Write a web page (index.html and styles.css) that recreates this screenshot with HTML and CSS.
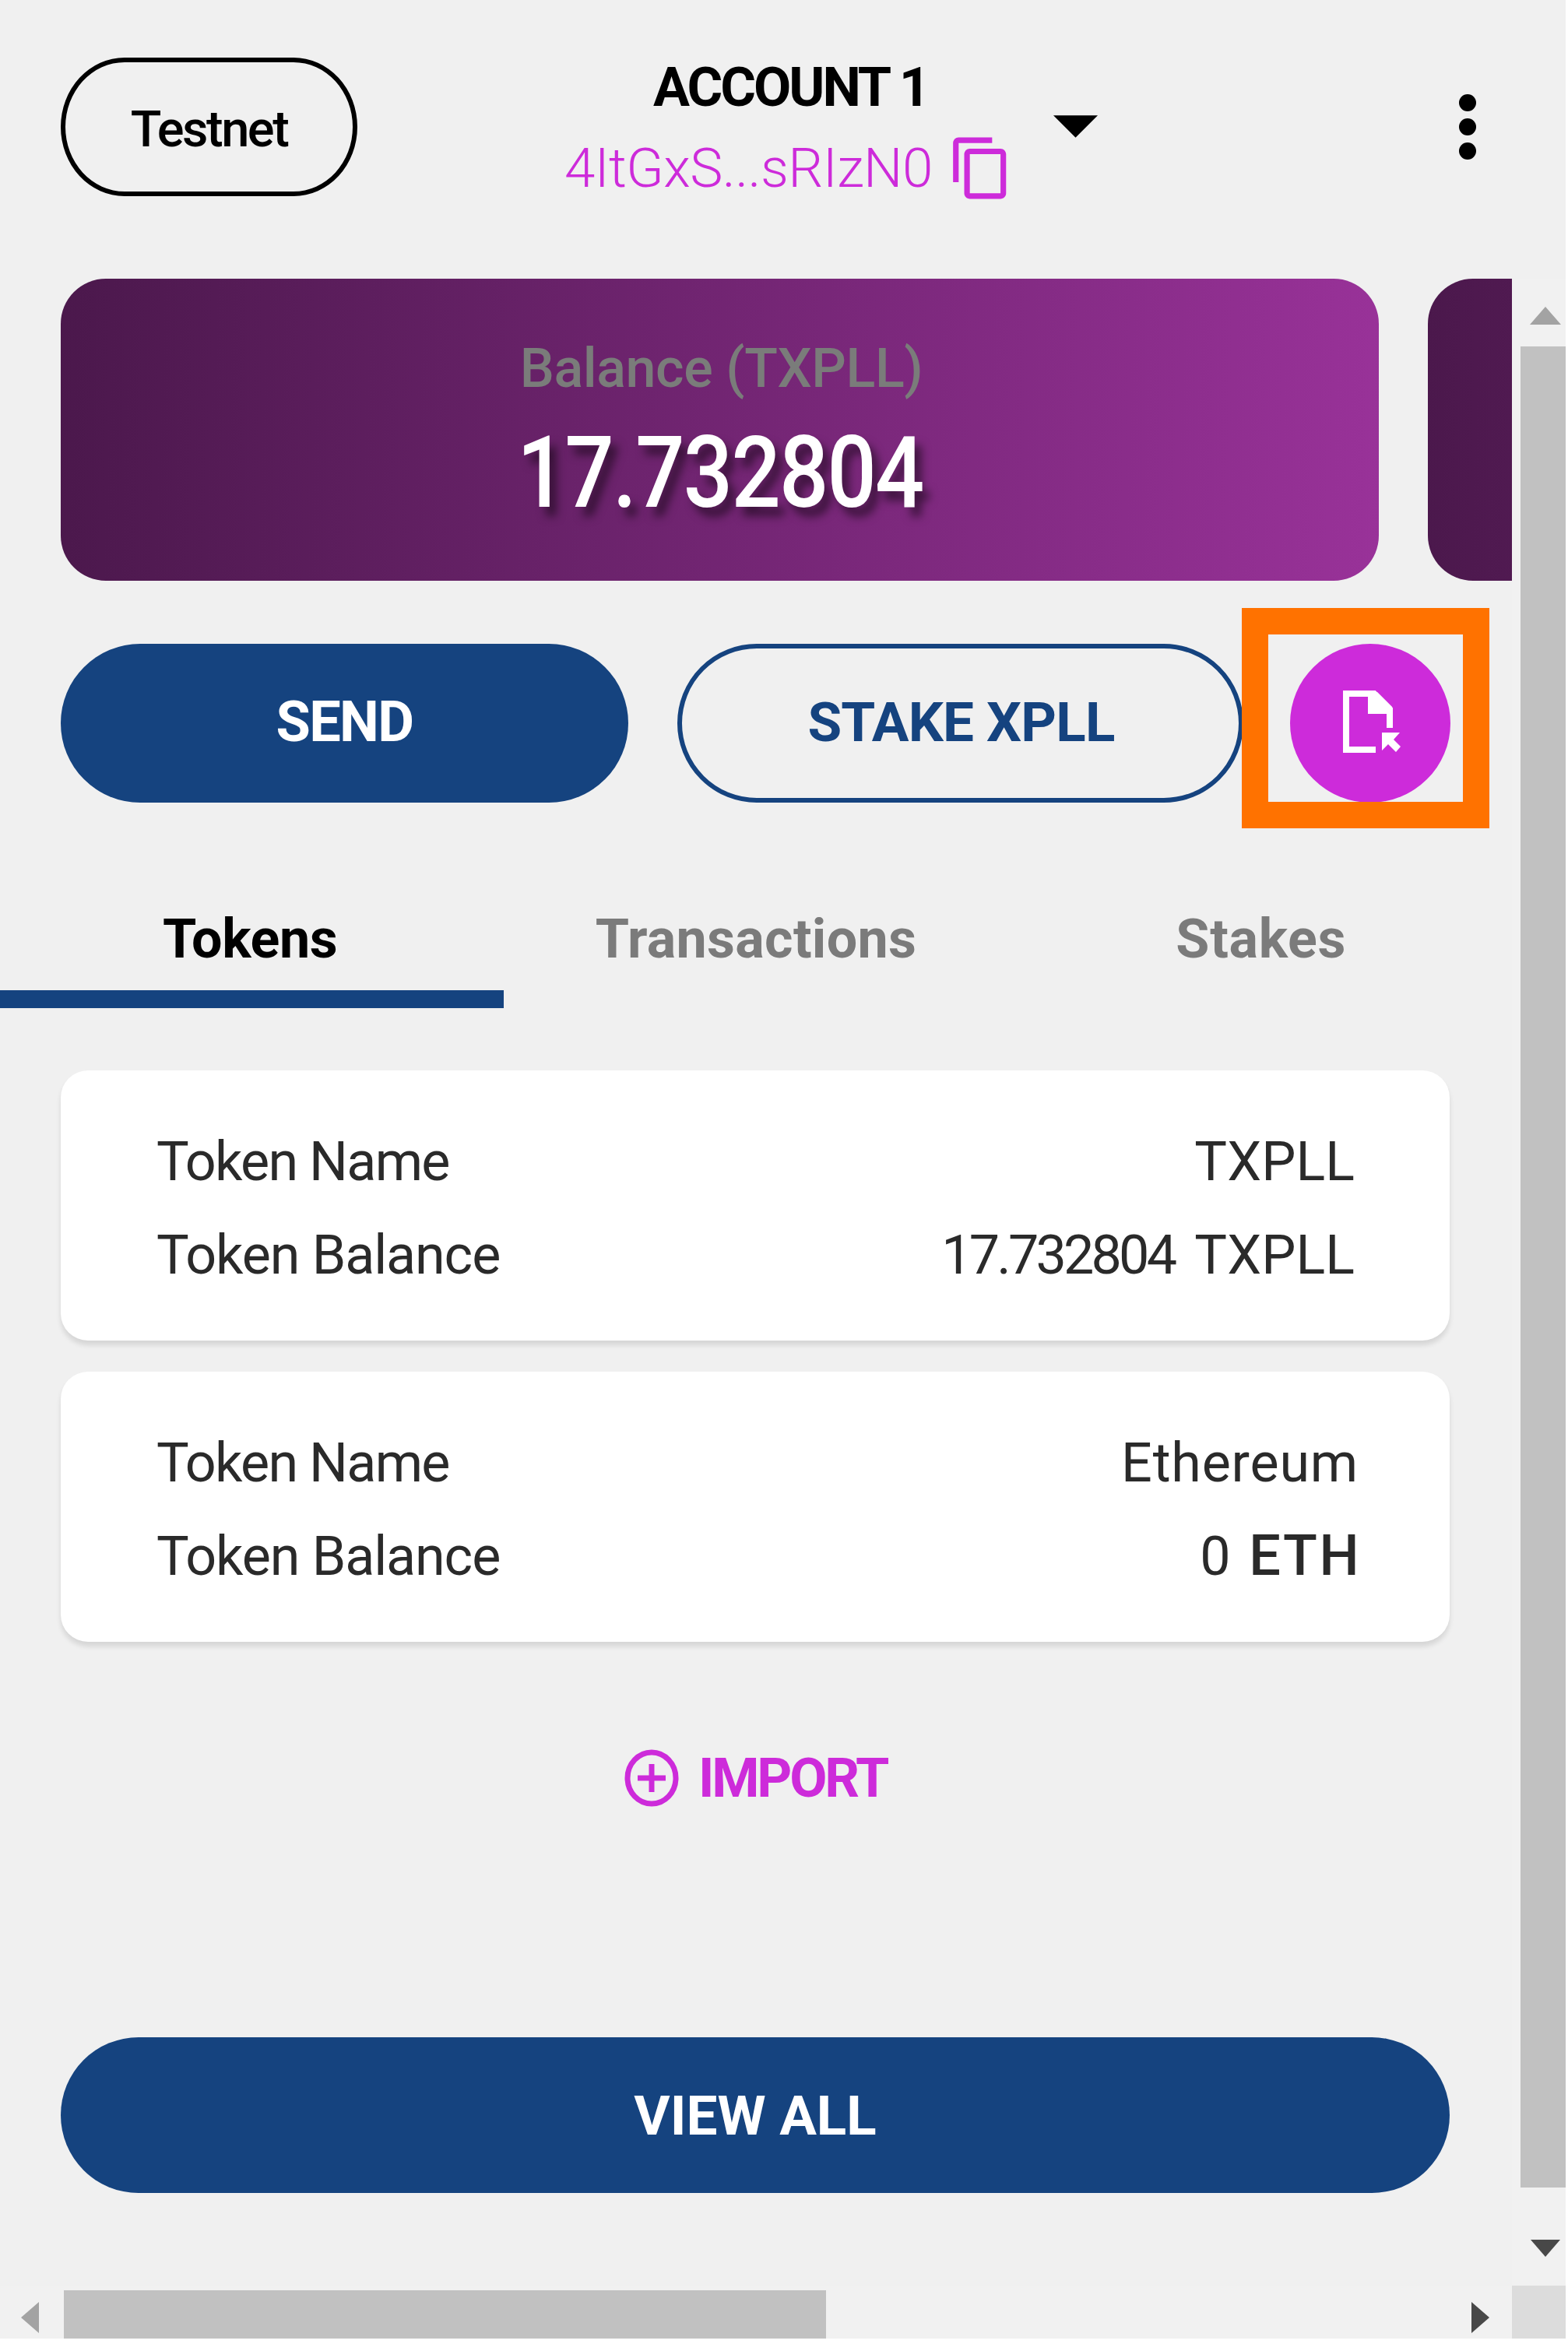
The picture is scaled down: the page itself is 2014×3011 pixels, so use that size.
FILE: index.html
```html
<!DOCTYPE html>
<html lang="en">
<head>
<meta charset="utf-8">
<title>Wallet</title>
<link rel="stylesheet" href="styles.css">
</head>
<body>
<div class="app">
  <header class="header">
    <button class="network"><span>Testnet</span></button>
    <div class="account">
      <div class="account-name"><span>ACCOUNT 1</span></div>
      <div class="account-address">
        <span>4ItGxS...sRIzN0</span>
        <svg class="copy" viewBox="0 0 24 24"><path d="M16 1H4c-1.1 0-2 .9-2 2v14h2V3h12V1zm3 4H8c-1.1 0-2 .9-2 2v14c0 1.1.9 2 2 2h11c1.1 0 2-.9 2-2V7c0-1.1-.9-2-2-2zm0 16H8V7h11v14z"/></svg>
      </div>
    </div>
    <svg class="caret" viewBox="0 0 10 5"><path d="M0 0l5 5 5-5z"/></svg>
    <svg class="more" viewBox="0 0 24 86"><circle cx="12" cy="12" r="11"/><circle cx="12" cy="43" r="11"/><circle cx="12" cy="74" r="11"/></svg>
  </header>

  <div class="body">
    <main class="content">
      <section class="balances">
        <div class="balance">
          <div class="balance-label">Balance (TXPLL)</div>
          <div class="balance-value"><span>17.732804</span></div>
        </div>
        <div class="balance"></div>
      </section>

      <section class="actions">
        <button class="btn btn-solid"><span class="send">SEND</span></button>
        <button class="btn btn-outline"><span class="stake">STAKE XPLL</span></button>
        <button class="contract">
          <svg viewBox="0 0 80 86">
            <path d="M47 79H9V7h36l20 20v24" fill="none" stroke="#fff" stroke-width="8"/>
            <path d="M37 5h12l19 19v9H37z" fill="#fff"/>
            <path d="M55 57h23l-8 9 9 9-6 7-10-10-8 8z" fill="#fff"/>
          </svg>
        </button>
        <div class="highlight"></div>
      </section>

      <nav class="tabs">
        <div class="tab active">Tokens</div>
        <div class="tab transactions">Transactions</div>
        <div class="tab stakes">Stakes</div>
      </nav>

      <section class="tokens">
        <div class="token">
          <div class="row"><span class="name">Token Name</span><span class="symbol">TXPLL</span></div>
          <div class="row"><span class="label">Token Balance</span><span class="amount"><span class="digits">17.732804</span> TXPLL</span></div>
        </div>
        <div class="token">
          <div class="row"><span class="name">Token Name</span><span class="ethereum">Ethereum</span></div>
          <div class="row"><span class="label">Token Balance</span><span class="amount">0 <span class="eth">ETH</span></span></div>
        </div>
      </section>

      <div class="import">
        <svg viewBox="0 0 70 74"><ellipse cx="35" cy="37" rx="31" ry="33"/><path d="M35 19v36M17 37h36"/></svg>
        <span>IMPORT</span>
      </div>

      <button class="btn btn-solid view-all"><span>VIEW ALL</span></button>
    </main>
    <div class="vscroll">
      <svg class="arrow-up" viewBox="0 0 40 23"><path d="M0 23L20 0l20 23z"/></svg>
      <div class="vthumb"></div>
      <svg class="arrow-down" viewBox="0 0 38 22"><path d="M0 0h38L19 22z"/></svg>
    </div>
  </div>

  <div class="hscroll">
    <svg class="arrow-left" viewBox="0 0 23 40"><path d="M23 0v40L0 20z"/></svg>
    <div class="hthumb"></div>
    <svg class="arrow-right" viewBox="0 0 23 40"><path d="M0 0v40l23-20z"/></svg>
    <div class="corner"></div>
  </div>
</div>
</body>
</html>
```
FILE: styles.css
```css
* { box-sizing: border-box; }

body {
  margin: 0;
  background: #fff;
  font-family: "Roboto", "Liberation Sans", sans-serif;
  color: #000;
}

button {
  margin: 0;
  padding: 0;
  font-family: inherit;
  display: flex;
  align-items: center;
  justify-content: center;
}

svg { display: block; flex: none; }

.app {
  width: 2011px;
  height: 3004px;
  background: #f0f0f0;
  display: flex;
  flex-direction: column;
  overflow: hidden;
}

/* Header */
.header {
  height: 358px;
  flex: none;
  padding: 0 0 33px 78px;
  display: flex;
  align-items: center;
}

.network {
  width: 381px;
  height: 178px;
  border: 6px solid #000;
  border-radius: 82px / 89px;
  background: none;
  color: #000;
  font-size: 65px;
  font-weight: 500;
  letter-spacing: -2.5px;
  padding-top: 6px;
}

.account {
  width: 565px;
  margin-left: 268px;
  padding-top: 3px;
  line-height: 103px;
}

.account-name {
  padding-left: 112px;
  font-size: 70px;
  font-weight: 700;
  letter-spacing: -3px;
  white-space: nowrap;
}

.account-address {
  display: flex;
  align-items: center;
  justify-content: space-between;
  color: #cd2bda;
  font-size: 71px;
  font-weight: 300;
  letter-spacing: -0.6px;
}

.account-address span { margin-left: -2px; }

.copy { width: 86px; height: 86px; margin-right: -11px; fill: #cd2bda; }
.caret { width: 57px; height: 29px; margin-left: 61px; }
.more { width: 24px; height: 86px; margin-left: 463px; }

/* Scrollable area */
.body { display: flex; height: 2578px; flex: none; }

.content {
  width: 1942px;
  padding-left: 78px;
  overflow: hidden;
  display: flex;
  flex-direction: column;
}

.balances { display: flex; gap: 63px; flex: none; }

.balance {
  width: 1693px;
  height: 388px;
  flex: none;
  border-radius: 58px;
  background: linear-gradient(92deg, #4b184c 0%, #993299 100%);
  padding-top: 67px;
  text-align: center;
}

.balance-label {
  color: #7a7c7a;
  font-size: 70px;
  font-weight: 500;
  line-height: 96px;
  letter-spacing: -.4px;
  padding-left: 4px;
}

.balance-value {
  color: #fff;
  font-size: 128px;
  font-weight: 500;
  line-height: 172px;
  letter-spacing: -2px;
  text-shadow: 10px 12px 12px rgba(0, 0, 0, .5);
}

.balance-value span { display: inline-block; transform: scaleX(.87); }

.actions {
  position: relative;
  display: flex;
  gap: 63px;
  margin-top: 81px;
  flex: none;
}

.btn {
  height: 204px;
  border-radius: 102px;
  font-size: 72px;
  font-weight: 700;
}

.btn-solid { width: 729px; border: 0; background: #15437f; color: #fff; }

.btn-outline {
  width: 727px;
  border: 6px solid #15437f;
  background: none;
  color: #15437f;
}

.send { letter-spacing: -1.6px; margin-top: -3px; }
.stake { font-size: 71px; letter-spacing: -.8px; margin: -3px -2px 0 0; }

.contract {
  width: 206px;
  height: 204px;
  margin-left: -3px;
  border: 0;
  border-radius: 50%;
  background: #cd2bda;
}

.contract svg { width: 80px; height: 86px; margin-top: -4px; }

.highlight {
  position: absolute;
  left: 1517px;
  top: -46px;
  width: 318px;
  height: 283px;
  border: 34px solid #ff7200;
}

.tabs {
  display: flex;
  flex: none;
  margin: 113px 0 0 -78px;
}

.tab {
  width: 648px;
  height: 151px;
  border-bottom: 23px solid transparent;
  text-align: center;
  font-size: 70px;
  font-weight: 700;
  line-height: 125px;
  color: #7b7b7b;
}

.active { color: #000; border-bottom-color: #15437f; letter-spacing: -.4px; padding-right: 5px; }
.transactions { letter-spacing: .3px; }
.stakes { letter-spacing: .7px; padding-left: 3px; }

.tokens {
  display: flex;
  flex-direction: column;
  gap: 40px;
  width: 1784px;
  margin-top: 80px;
}

.token {
  height: 347px;
  padding: 57px 122px 0 123px;
  border-radius: 35px;
  background: #fff;
  box-shadow: 0 6px 6px rgba(0, 0, 0, .11);
}

.row {
  display: flex;
  justify-content: space-between;
  color: #2a2a2a;
  font-size: 70px;
  font-weight: 400;
  line-height: 120px;
  white-space: nowrap;
}

.name { letter-spacing: -1.7px; }
.label { letter-spacing: -1.1px; }
.amount, .symbol { letter-spacing: .1px; }
.digits { letter-spacing: -3.8px; margin-right: 10px; }
.ethereum { letter-spacing: .8px; margin-right: -5px; }
.eth { font-size: 72px; font-weight: 500; letter-spacing: 2.5px; margin: 0 -8px 0 6px; }

.import {
  width: 1784px;
  height: 100px;
  margin-top: 125px;
  padding-left: 724px;
  display: flex;
  align-items: center;
  gap: 25px;
  color: #cd2bda;
  font-size: 70px;
  font-weight: 700;
  letter-spacing: -3.2px;
}

.import svg {
  width: 70px;
  height: 74px;
  fill: none;
  stroke: #cd2bda;
  stroke-width: 7;
}

.view-all { width: 1784px; height: 200px; margin-top: 283px; border-radius: 100px; font-size: 71px; flex: none; }

/* Scrollbars */
.vscroll {
  width: 69px;
  background: #f1f1f1;
  padding: 36px 0 0 11px;
  display: flex;
  flex-direction: column;
}

.arrow-up { width: 40px; height: 23px; margin-left: 12px; fill: #a3a3a3; }
.vthumb { height: 2365px; margin-top: 28px; background: #c1c1c1; flex: none; }
.arrow-down { width: 38px; height: 22px; margin: 67px 0 0 13px; fill: #484848; }

.hscroll {
  height: 68px;
  background: #f1f1f1;
  display: flex;
  align-items: center;
  padding-left: 27px;
}

.arrow-left { width: 23px; height: 40px; margin-top: 14px; fill: #a3a3a3; }
.hthumb { width: 979px; height: 62px; margin: 6px 0 0 32px; background: #c1c1c1; }
.arrow-right { width: 23px; height: 40px; margin: 14px 0 0 829px; fill: #484848; }
.corner { width: 69px; height: 68px; margin-left: auto; background: #dcdcdc; }
```
